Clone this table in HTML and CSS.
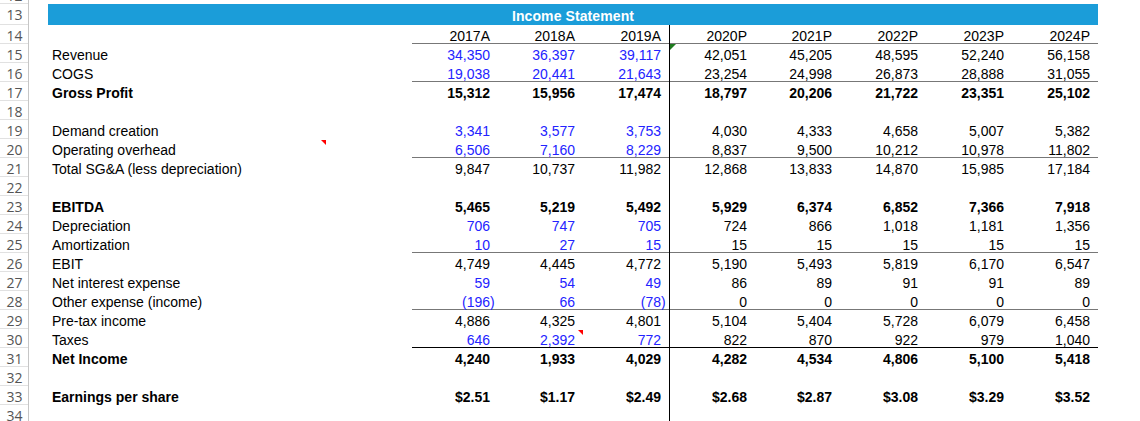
FILE: index.html
```html
<!DOCTYPE html>
<html>
<head>
<meta charset="utf-8">
<link rel="stylesheet" href="styles.css">
</head>
<body>
<div class="sheet">
  <div class="row r12"><div class="rh">12</div></div>
  <div class="row r13"><div class="rh">13</div><div class="sp"></div><div class="band">Income Statement</div></div>

  <div class="row ul hdr"><div class="rh">14</div><div class="sp"></div><div class="lb"></div>
    <div class="v">2017A</div><div class="v">2018A</div><div class="v">2019A</div><div class="v p1">2020P</div><div class="v">2021P</div><div class="v">2022P</div><div class="v">2023P</div><div class="v">2024P</div></div>

  <div class="row"><div class="rh">15</div><div class="sp"></div><div class="lb">Revenue</div>
    <div class="v in">34,350</div><div class="v in">36,397</div><div class="v in">39,117</div><div class="v p1"><span class="tri-g"></span>42,051</div><div class="v">45,205</div><div class="v">48,595</div><div class="v">52,240</div><div class="v">56,158</div></div>

  <div class="row ul"><div class="rh">16</div><div class="sp"></div><div class="lb">COGS</div>
    <div class="v in">19,038</div><div class="v in">20,441</div><div class="v in">21,643</div><div class="v p1">23,254</div><div class="v">24,998</div><div class="v">26,873</div><div class="v">28,888</div><div class="v">31,055</div></div>

  <div class="row b"><div class="rh">17</div><div class="sp"></div><div class="lb">Gross Profit</div>
    <div class="v">15,312</div><div class="v">15,956</div><div class="v">17,474</div><div class="v p1">18,797</div><div class="v">20,206</div><div class="v">21,722</div><div class="v">23,351</div><div class="v">25,102</div></div>

  <div class="row"><div class="rh">18</div><div class="sp"></div><div class="lb"></div>
    <div class="v"></div><div class="v"></div><div class="v"></div><div class="v p1"></div><div class="v"></div><div class="v"></div><div class="v"></div><div class="v"></div></div>

  <div class="row"><div class="rh">19</div><div class="sp"></div><div class="lb">Demand creation</div>
    <div class="v in">3,341</div><div class="v in">3,577</div><div class="v in">3,753</div><div class="v p1">4,030</div><div class="v">4,333</div><div class="v">4,658</div><div class="v">5,007</div><div class="v">5,382</div></div>

  <div class="row ul"><div class="rh">20</div><div class="sp"></div><div class="lb">Operating overhead<span class="tri-r lbtri"></span></div>
    <div class="v in">6,506</div><div class="v in">7,160</div><div class="v in">8,229</div><div class="v p1">8,837</div><div class="v">9,500</div><div class="v">10,212</div><div class="v">10,978</div><div class="v">11,802</div></div>

  <div class="row"><div class="rh">21</div><div class="sp"></div><div class="lb">Total SG&amp;A (less depreciation)</div>
    <div class="v">9,847</div><div class="v">10,737</div><div class="v">11,982</div><div class="v p1">12,868</div><div class="v">13,833</div><div class="v">14,870</div><div class="v">15,985</div><div class="v">17,184</div></div>

  <div class="row"><div class="rh">22</div><div class="sp"></div><div class="lb"></div>
    <div class="v"></div><div class="v"></div><div class="v"></div><div class="v p1"></div><div class="v"></div><div class="v"></div><div class="v"></div><div class="v"></div></div>

  <div class="row b"><div class="rh">23</div><div class="sp"></div><div class="lb">EBITDA</div>
    <div class="v">5,465</div><div class="v">5,219</div><div class="v">5,492</div><div class="v p1">5,929</div><div class="v">6,374</div><div class="v">6,852</div><div class="v">7,366</div><div class="v">7,918</div></div>

  <div class="row"><div class="rh">24</div><div class="sp"></div><div class="lb">Depreciation</div>
    <div class="v in">706</div><div class="v in">747</div><div class="v in">705</div><div class="v p1">724</div><div class="v">866</div><div class="v">1,018</div><div class="v">1,181</div><div class="v">1,356</div></div>

  <div class="row ul"><div class="rh">25</div><div class="sp"></div><div class="lb">Amortization</div>
    <div class="v in">10</div><div class="v in">27</div><div class="v in">15</div><div class="v p1">15</div><div class="v">15</div><div class="v">15</div><div class="v">15</div><div class="v">15</div></div>

  <div class="row"><div class="rh">26</div><div class="sp"></div><div class="lb">EBIT</div>
    <div class="v">4,749</div><div class="v">4,445</div><div class="v">4,772</div><div class="v p1">5,190</div><div class="v">5,493</div><div class="v">5,819</div><div class="v">6,170</div><div class="v">6,547</div></div>

  <div class="row"><div class="rh">27</div><div class="sp"></div><div class="lb">Net interest expense</div>
    <div class="v in">59</div><div class="v in">54</div><div class="v in">49</div><div class="v p1">86</div><div class="v">89</div><div class="v">91</div><div class="v">91</div><div class="v">89</div></div>

  <div class="row ul"><div class="rh">28</div><div class="sp"></div><div class="lb">Other expense (income)</div>
    <div class="v in"><span class="neg">(196)</span></div><div class="v in">66</div><div class="v in"><span class="neg">(78)</span></div><div class="v p1">0</div><div class="v">0</div><div class="v">0</div><div class="v">0</div><div class="v">0</div></div>

  <div class="row"><div class="rh">29</div><div class="sp"></div><div class="lb">Pre-tax income</div>
    <div class="v">4,886</div><div class="v">4,325</div><div class="v">4,801</div><div class="v p1">5,104</div><div class="v">5,404</div><div class="v">5,728</div><div class="v">6,079</div><div class="v">6,458</div></div>

  <div class="row ulk"><div class="rh">30</div><div class="sp"></div><div class="lb">Taxes</div>
    <div class="v in">646</div><div class="v in">2,392<span class="tri-r vtri"></span></div><div class="v in">772</div><div class="v p1">822</div><div class="v">870</div><div class="v">922</div><div class="v">979</div><div class="v">1,040</div></div>

  <div class="row b"><div class="rh">31</div><div class="sp"></div><div class="lb">Net Income</div>
    <div class="v">4,240</div><div class="v">1,933</div><div class="v">4,029</div><div class="v p1">4,282</div><div class="v">4,534</div><div class="v">4,806</div><div class="v">5,100</div><div class="v">5,418</div></div>

  <div class="row"><div class="rh">32</div><div class="sp"></div><div class="lb"></div>
    <div class="v"></div><div class="v"></div><div class="v"></div><div class="v p1"></div><div class="v"></div><div class="v"></div><div class="v"></div><div class="v"></div></div>

  <div class="row b"><div class="rh">33</div><div class="sp"></div><div class="lb">Earnings per share</div>
    <div class="v">$2.51</div><div class="v">$1.17</div><div class="v">$2.49</div><div class="v p1">$2.68</div><div class="v">$2.87</div><div class="v">$3.08</div><div class="v">$3.29</div><div class="v">$3.52</div></div>

  <div class="row"><div class="rh">34</div><div class="sp"></div><div class="lb"></div>
    <div class="v"></div><div class="v"></div><div class="v"></div><div class="v p1"></div><div class="v"></div><div class="v"></div><div class="v"></div><div class="v"></div></div>
</div>
</body>
</html>
```

FILE: styles.css
```css
html, body {
  margin: 0;
  padding: 0;
  background: #ffffff;
  overflow: hidden;
}

.sheet {
  margin-top: -15px;
  font-family: "Liberation Sans", Arial, sans-serif;
  font-size: 14px;
  color: #000;
}

.row {
  display: grid;
  grid-template-columns: 29px 19px 364px 86px 85px 86px 86px 85px 86px 86px 86px 1fr;
  grid-template-rows: 19px;
  height: 19px;
  line-height: 22px;
}

.r13 {
  grid-template-rows: 21px;
  height: 21px;
  line-height: 23px;
}

.rh {
  font-family: "Open Sans", "Noto Sans", sans-serif;
  font-size: 14px;
  font-weight: normal;
  color: #555;
  text-align: center;
  line-height: 21px;
  box-shadow: inset -1px 0 #c6c6c6, inset 0 -1px #e1e1e1;
}

.band {
  grid-column: 3 / 12;
  background: #1b9dd9;
  color: #fff;
  font-weight: bold;
  text-align: center;
  line-height: 25px;
  letter-spacing: 0.1px;
}

.lb {
  padding-left: 4px;
  white-space: nowrap;
  position: relative;
}

.v {
  text-align: right;
  padding-right: 8px;
  white-space: nowrap;
  position: relative;
}

.v.in {
  color: #2323ff;
}

.b .lb,
.b .v {
  font-weight: bold;
}

.neg {
  margin-right: -4.7px;
}

.v.p1 {
  box-shadow: inset 1px 0 #000;
}

.row.ul .v {
  box-shadow: inset 0 -1px #777;
}

.row.ul .v.p1 {
  box-shadow: inset 1px 0 #000, inset 0 -1px #777;
}

.row.ulk .v {
  box-shadow: inset 0 -1px #000;
}

.row.ulk .v.p1 {
  box-shadow: inset 1px 0 #000, inset 0 -1px #000;
}

.tri-r {
  position: absolute;
  width: 0;
  height: 0;
  border-top: 5px solid #ff0000;
  border-left: 5px solid transparent;
}

.lbtri {
  left: 273px;
  top: 1px;
}

.vtri {
  right: 0;
  top: 1px;
}

.tri-g {
  position: absolute;
  left: 1px;
  top: 0;
  width: 0;
  height: 0;
  border-top: 6px solid #1e7b1e;
  border-right: 6px solid transparent;
}
```
